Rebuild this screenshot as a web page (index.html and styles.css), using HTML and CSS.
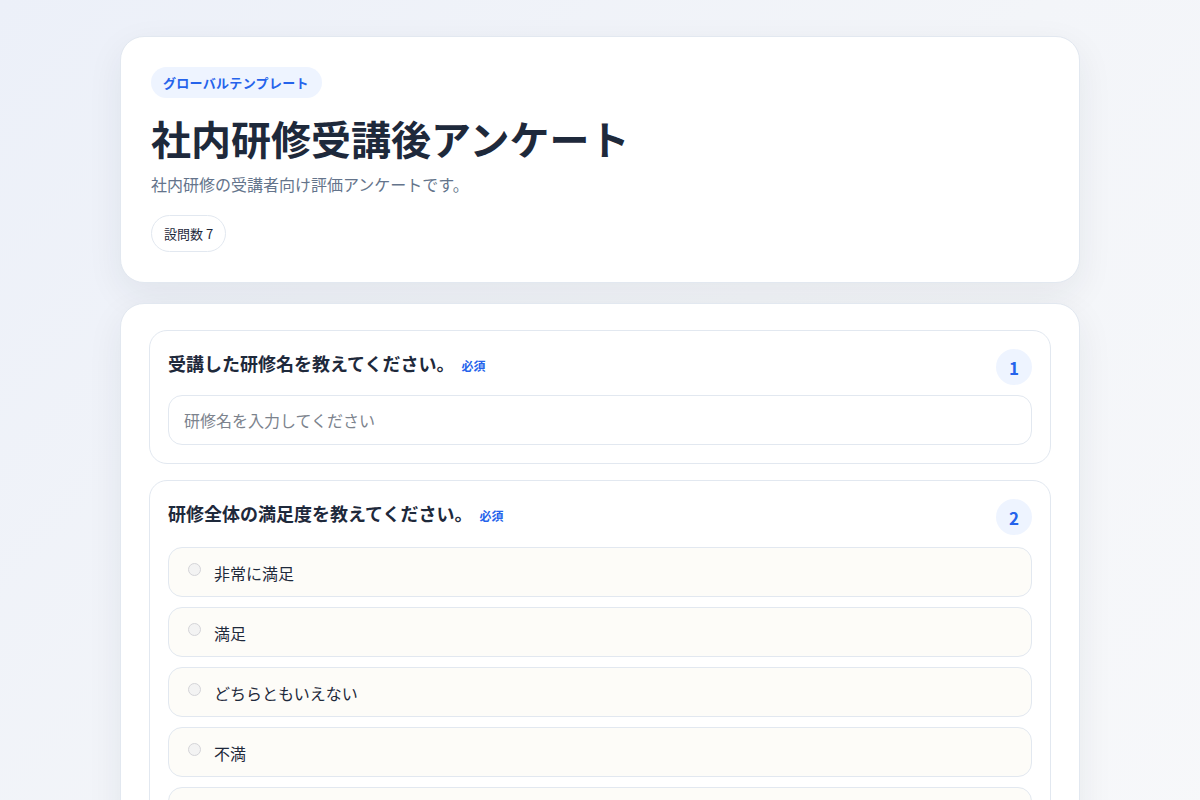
FILE: index.html
```html
<!DOCTYPE html>
<html lang="ja">
<head>
<meta charset="utf-8">
<title>社内研修受講後アンケート</title>
<link rel="stylesheet" href="styles.css">
</head>
<body>
<main class="page">
  <section class="card hero">
    <span class="tag">グローバルテンプレート</span>
    <h1 class="title">社内研修受講後アンケート</h1>
    <p class="desc">社内研修の受講者向け評価アンケートです。</p>
    <span class="chip">設問数 7</span>
  </section>

  <section class="card form">
    <div class="question">
      <div class="q-head">
        <h2 class="q-title">受講した研修名を教えてください。<span class="req">必須</span></h2>
        <span class="q-num">1</span>
      </div>
      <input class="text-input" type="text" placeholder="研修名を入力してください">
    </div>

    <div class="question">
      <div class="q-head">
        <h2 class="q-title">研修全体の満足度を教えてください。<span class="req">必須</span></h2>
        <span class="q-num">2</span>
      </div>
      <div class="options">
        <label class="option"><span class="radio"></span><span class="opt-text">非常に満足</span></label>
        <label class="option"><span class="radio"></span><span class="opt-text">満足</span></label>
        <label class="option"><span class="radio"></span><span class="opt-text">どちらともいえない</span></label>
        <label class="option"><span class="radio"></span><span class="opt-text">不満</span></label>
        <label class="option"><span class="radio"></span><span class="opt-text">非常に不満</span></label>
      </div>
    </div>
  </section>
</main>
</body>
</html>
```

FILE: styles.css
```css
* { box-sizing: border-box; }
html, body { margin: 0; padding: 0; }
body {
  font-family: "Noto Sans CJK JP", "Noto Sans", sans-serif;
  color: #1e293b;
  background: linear-gradient(135deg, #ecf0f9 0%, #f3f5f9 50%, #f7f8fa 100%);
  min-height: 100vh;
}
.page {
  width: 960px;
  margin: 0 auto;
  padding-top: 36px;
  display: flex;
  flex-direction: column;
  gap: 20px;
}
.card {
  background: #fff;
  border: 1px solid #e2e8f0;
  border-radius: 24px;
  box-shadow: 0 12px 36px rgba(30, 41, 59, 0.07);
}
.hero {
  padding: 30px 30px 30px;
  display: flex;
  flex-direction: column;
  align-items: flex-start;
}
.tag {
  display: inline-block;
  background: #eef4ff;
  color: #2563eb;
  font-size: 13px;
  font-weight: 700;
  line-height: 31px;
  height: 31px;
  padding: 0 13px 0 12px;
  border-radius: 999px;
  letter-spacing: 0.3px;
}
.title {
  margin: 14px 0 0;
  font-size: 40px;
  font-weight: 700;
  line-height: 52px;
  color: #1e293b;
  letter-spacing: 0;
}
.desc {
  margin: 7px 0 0;
  font-size: 16px;
  line-height: 26px;
  color: #64748b;
}
.chip {
  margin-top: 18px;
  display: inline-block;
  height: 37px;
  line-height: 35px;
  padding: 0 12px;
  border: 1px solid #e2e8f0;
  border-radius: 999px;
  font-size: 13px;
  color: #1e293b;
}
.form {
  padding: 26px 28px 40px;
  display: flex;
  flex-direction: column;
  gap: 16px;
}
.question {
  border: 1px solid #e2e8f0;
  border-radius: 18px;
  padding: 18px;
  background: #fff;
}
.q-head {
  display: flex;
  justify-content: space-between;
  align-items: flex-start;
  height: 36px;
}
.q-title {
  margin: 0;
  font-size: 18px;
  font-weight: 700;
  line-height: 28px;
  color: #1e293b;
}
.req {
  margin-left: 7px;
  font-size: 12px;
  font-weight: 700;
  color: #2563eb;
  vertical-align: 0;
}
.q-num {
  width: 36px;
  height: 36px;
  border-radius: 50%;
  background: #eef4ff;
  color: #2563eb;
  font-size: 17px;
  font-weight: 700;
  display: flex;
  align-items: center;
  justify-content: center;
}
.text-input {
  display: block;
  margin-top: 10px;
  width: 100%;
  height: 50px;
  border: 1px solid #e2e8f0;
  border-radius: 14px;
  padding: 0 15px;
  font-family: inherit;
  font-size: 16px;
  color: #1e293b;
  background: #fff;
  outline: none;
}
.text-input::placeholder { color: #7c838d; }
.options {
  margin-top: 12px;
  display: flex;
  flex-direction: column;
  gap: 10px;
}
.option {
  display: flex;
  align-items: center;
  height: 50px;
  padding: 0 19px;
  border: 1px solid #e2e8f0;
  border-radius: 14px;
  background: #fdfcf8;
}
.radio {
  width: 13px;
  height: 13px;
  border-radius: 50%;
  border: 1px solid #d4d4d8;
  background: #f3f3f3;
  margin-right: 13px;
  margin-top: -5px;
  flex: none;
}
.opt-text {
  font-size: 16px;
  color: #1e293b;
  line-height: 24px;
  padding-top: 2px;
}
```
